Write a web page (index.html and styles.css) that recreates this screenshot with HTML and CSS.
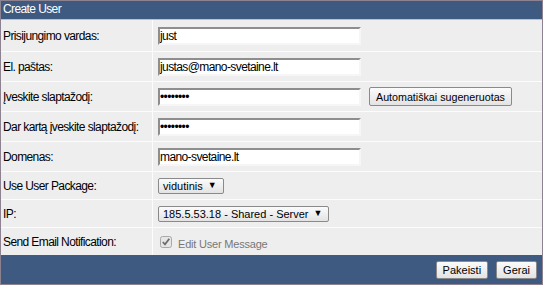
FILE: index.html
```html
<!DOCTYPE html>
<html lang="lt">
<head>
  <meta charset="UTF-8">
  <title>Create User</title>
  <link rel="stylesheet" href="styles.css">
</head>
<body>
  <div class="panel">
    <div class="panel-title">Create User</div>
    <div class="rows">
      <div class="row first">
        <div class="label">Prisijungimo vardas:</div>
        <div class="value"><input type="text" class="field" value="just"></div>
      </div>
      <div class="row">
        <div class="label">El. paštas:</div>
        <div class="value"><input type="text" class="field" value="justas@mano-svetaine.lt"></div>
      </div>
      <div class="row">
        <div class="label">Įveskite slaptažodį:</div>
        <div class="value"><input type="password" class="field" value="abcdefgh"><button type="button" class="btn gen">Automatiškai sugeneruotas</button></div>
      </div>
      <div class="row">
        <div class="label">Dar kartą įveskite slaptažodį:</div>
        <div class="value"><input type="password" class="field" value="abcdefgh"></div>
      </div>
      <div class="row">
        <div class="label">Domenas:</div>
        <div class="value"><input type="text" class="field" value="mano-svetaine.lt"></div>
      </div>
      <div class="row short">
        <div class="label">Use User Package:</div>
        <div class="value"><span class="select">vidutinis<span class="arrow">▼</span></span></div>
      </div>
      <div class="row short">
        <div class="label">IP:</div>
        <div class="value"><span class="select">185.5.53.18 - Shared - Server<span class="arrow">▼</span></span></div>
      </div>
      <div class="row short">
        <div class="label">Send Email Notification:</div>
        <div class="value"><span class="check">
          <svg width="12" height="12" viewBox="0 0 12 12"><rect x="0.5" y="0.5" width="11" height="11" rx="2" fill="#e6e6e6" stroke="#a9a9a9"/><path d="M2.8 6 L5 8.3 L9.3 2.8" fill="none" stroke="#6e6e6e" stroke-width="1.8"/></svg>
          <span class="check-text">Edit User Message</span></span></div>
      </div>
    </div>
    <div class="panel-foot">
      <button type="button" class="btn">Pakeisti</button>
      <button type="button" class="btn">Gerai</button>
    </div>
  </div>
</body>
</html>
```
FILE: styles.css
```css
body {
  margin: 0;
  font-family: "Liberation Sans", Arial, sans-serif;
  font-size: 12px;
  letter-spacing: -0.6px;
  color: #000;
  background: #fff;
}
.panel {
  width: 541px;
  height: 283px;
  border: 1px solid #8d8290;
  background: #eeeeee;
  display: flex;
  flex-direction: column;
}
.panel-title {
  background: #3f5a80;
  color: #fff;
  height: 18px;
  line-height: 17px;
  padding-left: 2px;
  border-bottom: 1px solid #b9c0cc;
}
.row {
  display: flex;
  height: 30px;
  border-top: 1px solid #fcfcfc;
  box-sizing: border-box;
}
.row.first {
  height: 31px;
  border-top: none;
}
.row.short {
  height: 28px;
}
.label {
  width: 149px;
  padding-left: 2px;
  border-right: 1px solid #fcfcfc;
  display: flex;
  align-items: center;
  white-space: nowrap;
}
.value {
  flex: 1;
  padding-left: 5px;
  display: flex;
  align-items: center;
}
.field {
  width: 203px;
  height: 18px;
  box-sizing: border-box;
  margin: 0;
  padding: 0;
  border: 2px solid;
  border-color: #8e8e8e #f6f6f6 #f6f6f6 #8e8e8e;
  background: #fff;
  font-family: "Liberation Sans", Arial, sans-serif;
  font-size: 12px;
  letter-spacing: -0.6px;
  outline: none;
}
.btn {
  font-family: "Liberation Sans", Arial, sans-serif;
  font-size: 11px;
  letter-spacing: 0;
  height: 18px;
  padding: 0 6px;
  border: 1px solid #8a8a8a;
  border-radius: 2px;
  background: linear-gradient(#fbfbfb, #e3e3e3);
  color: #000;
}
.gen {
  margin-left: 8px;
  height: 19px;
  padding: 0 6px;
  font-size: 10.7px;
}
.select {
  display: inline-flex;
  align-items: center;
  height: 16px;
  box-sizing: border-box;
  padding: 0 6px 0 4px;
  border: 1px solid #8a8a8a;
  border-radius: 2px;
  background: linear-gradient(#fbfbfb, #e3e3e3);
  font-size: 11px;
  letter-spacing: 0;
}
.arrow {
  font-size: 9px;
  margin-left: 5px;
  line-height: 1;
}
.check {
  display: inline-flex;
  align-items: center;
  gap: 6px;
  padding-left: 2px;
  padding-top: 4px;
}
.check svg {
  position: relative;
  top: -2px;
}
.check-text {
  color: #777;
  font-size: 11px;
  letter-spacing: -0.2px;
}
.panel-foot {
  flex: 1;
  background: #3f5a80;
  display: flex;
  justify-content: flex-end;
  align-items: center;
  gap: 8px;
  padding-right: 5px;
}
```
